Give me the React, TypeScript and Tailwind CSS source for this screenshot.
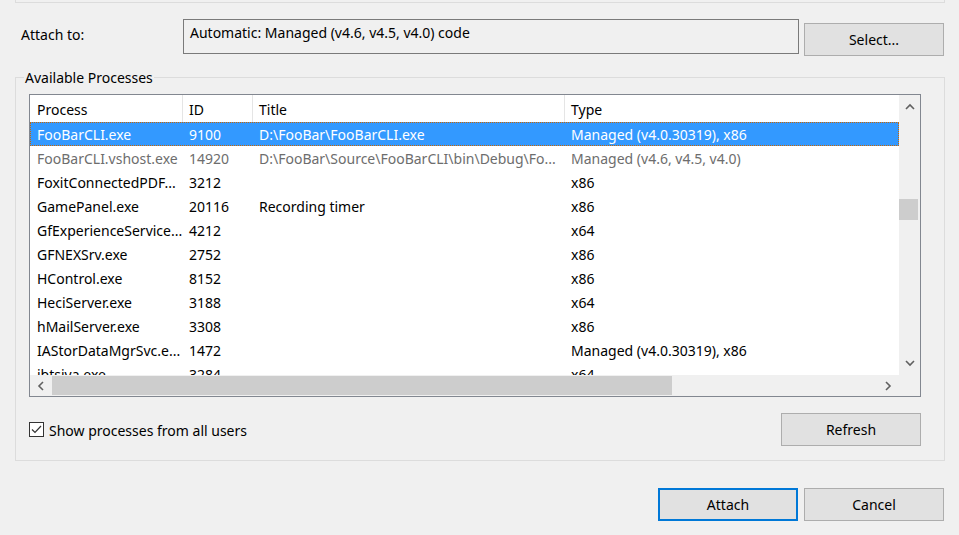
import React from 'react';

type Row = { name: string; id: string; title: string; type: string; dim?: boolean; selected?: boolean };

const rows: Row[] = [
  { name: 'FooBarCLI.exe', id: '9100', title: 'D:\\FooBar\\FooBarCLI.exe', type: 'Managed (v4.0.30319), x86', selected: true },
  { name: 'FooBarCLI.vshost.exe', id: '14920', title: 'D:\\FooBar\\Source\\FooBarCLI\\bin\\Debug\\Fo...', type: 'Managed (v4.6, v4.5, v4.0)', dim: true },
  { name: 'FoxitConnectedPDF...', id: '3212', title: '', type: 'x86' },
  { name: 'GamePanel.exe', id: '20116', title: 'Recording timer', type: 'x86' },
  { name: 'GfExperienceService...', id: '4212', title: '', type: 'x64' },
  { name: 'GFNEXSrv.exe', id: '2752', title: '', type: 'x86' },
  { name: 'HControl.exe', id: '8152', title: '', type: 'x86' },
  { name: 'HeciServer.exe', id: '3188', title: '', type: 'x64' },
  { name: 'hMailServer.exe', id: '3308', title: '', type: 'x86' },
  { name: 'IAStorDataMgrSvc.e...', id: '1472', title: '', type: 'Managed (v4.0.30319), x86' },
  { name: 'ibtsiva.exe', id: '3284', title: '', type: 'x64' },
];

function Chevron({ dir }: { dir: 'up' | 'down' | 'left' | 'right' }) {
  const d = {
    up: 'M1 6 L5 2 L9 6',
    down: 'M1 2 L5 6 L9 2',
    left: 'M6 1 L2 5 L6 9',
    right: 'M2 1 L6 5 L2 9',
  }[dir];
  const vertical = dir === 'up' || dir === 'down';
  return (
    <svg width={vertical ? 10 : 8} height={vertical ? 8 : 10} viewBox={vertical ? '0 0 10 8' : '0 0 8 10'}>
      <path d={d} fill="none" stroke="#606060" strokeWidth="1.6" />
    </svg>
  );
}

function WinButton({ label, focused }: { label: string; focused?: boolean }) {
  return (
    <button
      className={
        'h-[33px] w-[140px] bg-[#e1e1e1] text-black leading-[20px] pt-[1px] ' +
        (focused ? 'border-2 border-[#0078d7]' : 'border border-[#adadad]')
      }
    >
      {label}
    </button>
  );
}

export default function App() {
  return (
    <div className="h-[535px] w-full bg-[#f0f0f0] text-[14px] text-black overflow-hidden" style={{ fontFamily: '"Segoe UI", "Noto Sans", sans-serif' }}>
      <div className="ml-[15px] mr-[14px] h-[3px] border-x border-b border-[#dcdcdc]" />

      <div className="mt-[16px] flex items-start pl-[21px]">
        <div className="w-[162px] mt-[6px] leading-[20px]">Attach to:</div>
        <div className="h-[35px] w-[616px] border border-[#7a7a7a] pl-[6px] pt-[3px] leading-[20px]">
          Automatic: Managed (v4.6, v4.5, v4.0) code
        </div>
        <div className="ml-[5px] mt-[4px]">
          <WinButton label="Select..." />
        </div>
      </div>

      <div className="relative ml-[15px] mt-[21px] h-[384px] w-[930px] border border-[#dcdcdc]">
        <span className="absolute left-[8px] -top-[10px] bg-[#f0f0f0] px-[1px] leading-[20px]">Available Processes</span>

        <div className="ml-[13px] mt-[16px] h-[303px] w-[892px] border border-[#828790] bg-white grid grid-cols-[869px_21px] grid-rows-[280px_21px]">
          <div className="overflow-hidden">
            <div className="flex h-[27px] leading-[20px]">
              <div className="h-full w-[153px] shrink-0 border-r border-[#e5e5e5] pl-[7px] pt-[5px]">Process</div>
              <div className="h-full w-[70px] shrink-0 border-r border-[#e5e5e5] pl-[6px] pt-[5px]">ID</div>
              <div className="h-full w-[312px] shrink-0 border-r border-[#e5e5e5] pl-[6px] pt-[5px]">Title</div>
              <div className="h-full flex-1 pl-[6px] pt-[5px]">Type</div>
            </div>
            {rows.map((r) => (
              <div
                key={r.name}
                className={
                  'flex h-[24px] items-center pt-[2px] leading-[20px] whitespace-nowrap ' +
                  (r.selected
                    ? 'bg-[#3399ff] text-white border border-dotted border-[#cc6600]'
                    : r.dim
                    ? 'text-[#6d6d6d]'
                    : '')
                }
              >
                <div className={'shrink-0 truncate pl-[6px] ' + (r.selected ? 'w-[152px]' : 'w-[153px] pl-[7px]')}>{r.name}</div>
                <div className="w-[70px] shrink-0 truncate pl-[6px]">{r.id}</div>
                <div className="w-[312px] shrink-0 truncate pl-[6px]">{r.title}</div>
                <div className="flex-1 truncate pl-[6px]">{r.type}</div>
              </div>
            ))}
          </div>

          <div className="relative bg-[#f0f0f0] flex flex-col items-center justify-between py-[8px]">
            <Chevron dir="up" />
            <Chevron dir="down" />
            <div className="absolute left-0 top-[104px] h-[21px] w-[19px] bg-[#cdcdcd]" />
          </div>

          <div className="flex items-center bg-[#f0f0f0]">
            <div className="w-[22px] flex justify-center">
              <Chevron dir="left" />
            </div>
            <div className="h-[19px] w-[620px] bg-[#cdcdcd]" />
            <div className="flex-1" />
            <div className="w-[22px] flex justify-center">
              <Chevron dir="right" />
            </div>
          </div>
          <div className="bg-[#f0f0f0]" />
        </div>

        <div className="mt-[16px] flex items-center justify-between pl-[13px] pr-[23px]">
          <label className="flex items-center gap-[5px] leading-[20px]">
            <span className="flex h-[15px] w-[15px] items-center justify-center border border-[#333333] bg-white">
              <svg width="11" height="9" viewBox="0 0 11 9">
                <path d="M1 4.5 L4 7.5 L10 1" fill="none" stroke="#333333" strokeWidth="1.2" />
              </svg>
            </span>
            <span className="pt-[2px]">Show processes from all users</span>
          </label>
          <WinButton label="Refresh" />
        </div>
      </div>

      <div className="mt-[27px] flex justify-end gap-[6px] pr-[15px]">
        <WinButton label="Attach" focused />
        <WinButton label="Cancel" />
      </div>
    </div>
  );
}
